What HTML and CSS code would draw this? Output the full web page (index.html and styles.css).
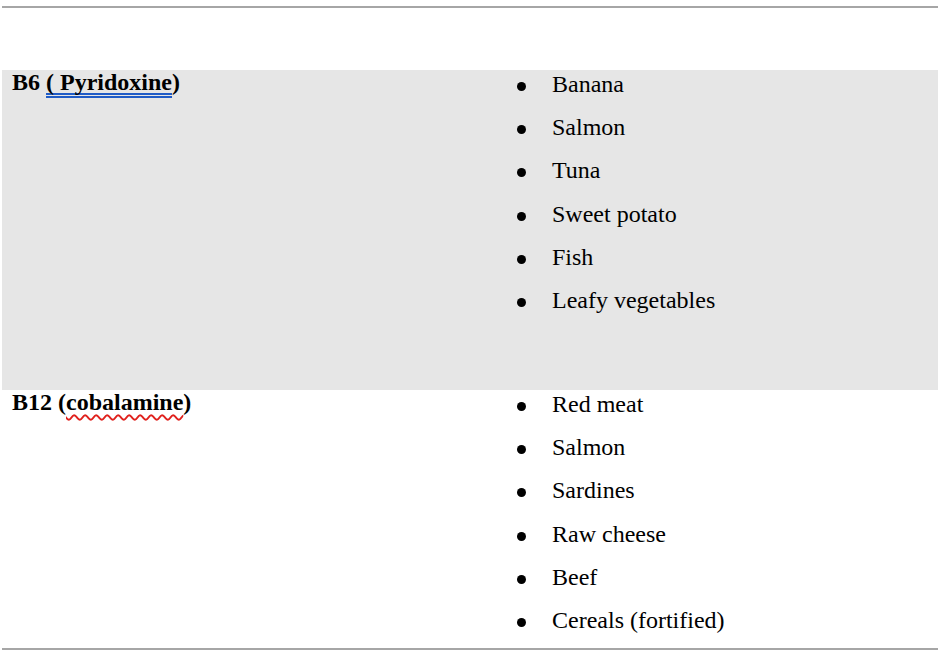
FILE: index.html
```html
<!DOCTYPE html>
<html>
<head>
<meta charset="utf-8">
<link rel="stylesheet" href="styles.css">
</head>
<body>
<div class="doc">
  <div class="row row-empty"></div>
  <div class="row row-shaded">
    <div class="name"><b>B6 <span class="grammar">( Pyridoxine</span>)</b></div>
    <ul class="foods">
      <li>Banana</li>
      <li>Salmon</li>
      <li>Tuna</li>
      <li>Sweet potato</li>
      <li>Fish</li>
      <li>Leafy vegetables</li>
    </ul>
  </div>
  <div class="row row-plain">
    <div class="name"><b>B12 (<span class="spell">cobalamine</span>)</b></div>
    <ul class="foods">
      <li>Red meat</li>
      <li>Salmon</li>
      <li>Sardines</li>
      <li>Raw cheese</li>
      <li>Beef</li>
      <li>Cereals (fortified)</li>
    </ul>
  </div>
</div>
</body>
</html>
```

FILE: styles.css
```css
html, body {
  margin: 0;
  padding: 0;
  background: #ffffff;
}
body {
  padding-top: 6px;
  font-family: "Liberation Serif", "Times New Roman", serif;
  font-size: 24px;
  color: #000;
}
.doc {
  width: 936px;
  margin-left: 2px;
  border-top: 2px solid #a6a6a6;
  border-bottom: 2px solid #a6a6a6;
}
.row {
  display: grid;
  grid-template-columns: 500px 1fr;
}
.row-empty {
  height: 62px;
}
.row-shaded {
  background: #e6e6e6;
  height: 320px;
  box-sizing: border-box;
}
.row-plain {
  height: 258px;
  box-sizing: border-box;
}
.name {
  padding-left: 10px;
  line-height: 24px;
}
.grammar {
  text-decoration: underline double #1f5bc6;
  text-decoration-thickness: 1.5px;
  text-decoration-skip-ink: none;
  text-underline-offset: 3px;
}
.spell {
  text-decoration: underline wavy #e0201c;
  text-decoration-thickness: 1.5px;
  text-decoration-skip-ink: none;
  text-underline-offset: 4px;
}
.foods {
  list-style: none;
  margin: 0;
  padding: 2px 0 0 0;
}
.foods li {
  display: flex;
  line-height: 24px;
  margin-bottom: 19.2px;
}
.foods li::before {
  content: "";
  width: 9px;
  height: 9px;
  border-radius: 50%;
  background: #000;
  margin-left: 15px;
  margin-right: 26px;
  margin-top: 10px;
  flex: none;
}
```
